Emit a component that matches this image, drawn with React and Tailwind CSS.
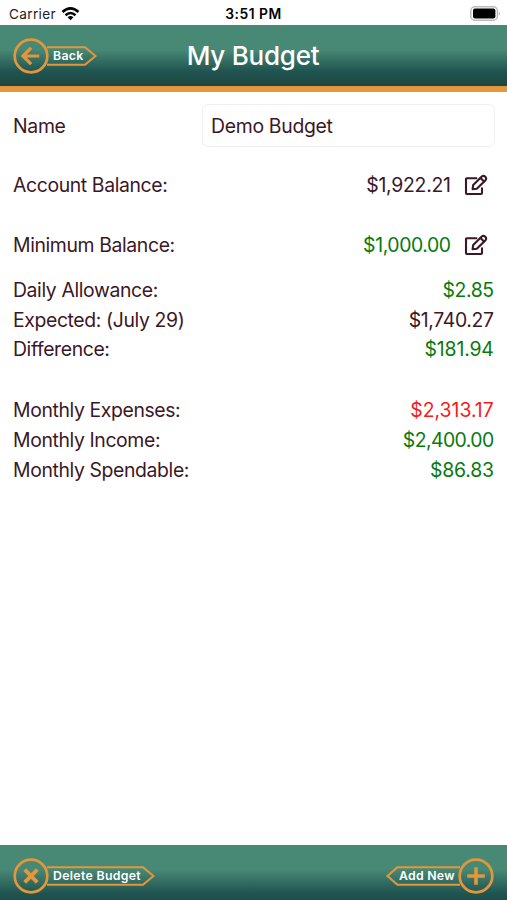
function EditIcon() {
  return (
    <svg className="h-[22px] w-6 shrink-0" viewBox="0 0 24 22" fill="none" stroke="#3b1727" strokeWidth="2.1" strokeLinecap="round" strokeLinejoin="round">
      <path d="M12.4 4.2H2.9Q2 4.2 2 5.1V19.1Q2 20 2.9 20H17.1Q18 20 18 19.1V14.4" />
      <path d="M8.6 15.2 9.2 11 17.8 2.5Q19.5 1.2 21.3 2.8 22.9 4.5 21.5 6.2L12.8 14.8Z" />
      <path d="M16.5 4.1 20 7.6" />
    </svg>
  );
}

function TagLeft({ label, width, icon }) {
  return (
    <button className="relative flex h-9 items-center text-left" style={{ width }}>
      <svg className="absolute inset-0 h-full w-full" fill="none" stroke="#e4963c" strokeWidth="2.1">
        <path d={`M34 9.2H${width - 12}L${width - 1.5} 18L${width - 12} 26.8H34`} />
        <circle cx="18" cy="18" r="16.3" strokeWidth="2.7" />
        {icon}
      </svg>
      <span className="relative ml-[40px] whitespace-nowrap text-[12.3px] font-semibold leading-4 tracking-[0.32px] text-white">{label}</span>
    </button>
  );
}

function Row({ label, value, tracking = "tracking-[-0.3px]", color = "text-[#3b1727]", edit, className = "h-[29.8px]" }) {
  return (
    <div className={`flex items-center justify-between ${className}`}>
      <span className="tracking-[-0.38px]">{label}</span>
      <span className="flex items-center">
        <span className={`${color} ${tracking}`}>{value}</span>
        {edit && <span className="ml-[13px] mr-[6px]"><EditIcon /></span>}
      </span>
    </div>
  );
}

export default function App() {
  return (
    <div className="flex h-[900px] w-[507px] flex-col overflow-hidden bg-white font-['Inter',sans-serif] text-[19.4px] leading-[24px] text-[#3b1727]">
      <div className="grid h-[25px] shrink-0 grid-cols-[1fr_auto_1fr] items-center pl-[9px] pr-[6px] pt-[2px] text-black">
        <div className="flex items-center gap-[5px]">
          <span className="text-[13.6px] leading-4 tracking-[0.35px] text-[#222]">Carrier</span>
          <svg className="h-[14px] w-[19px]" viewBox="0 0 18 14" fill="none" stroke="#000" strokeWidth="2.5">
            <path d="M1 5Q9-2.2 17 5M4 8.2Q9 3.8 14 8.2" />
            <path d="M6.1 10.3Q9 7.9 11.9 10.3L9 13.2Z" fill="#000" stroke="none" />
          </svg>
        </div>
        <span className="-ml-[3px] text-center text-[13.8px] font-semibold leading-4 tracking-[0.5px]">3:51 PM</span>
        <svg className="h-4 w-[31px] justify-self-end" viewBox="0 0 31 16">
          <rect x=".8" y=".8" width="26.6" height="13.4" rx="4" fill="#fff" stroke="#bcbcbc" strokeWidth="1.5" />
          <rect x="3" y="2.6" width="22.4" height="9.8" rx="2" fill="#000" />
          <path d="M28.8 5.2Q30.7 7.5 28.8 9.8Z" fill="#aaa" />
        </svg>
      </div>
      <header className="grid h-[67px] shrink-0 grid-cols-[1fr_auto_1fr] items-center border-b-[6px] border-[#e4963c] bg-[linear-gradient(#488975_0%,#488975_40%,#205451_76%,#1e4641_100%)] px-[13px]">
        <TagLeft label="Back" width={84} icon={<path d="M26.2 18H10.5M18.1 9.8 9.9 18 18.1 26.2" strokeWidth="3.2" />} />
        <h1 className="-ml-px text-[26px] font-medium leading-8 tracking-[-0.25px] text-white">My Budget</h1>
        <span />
      </header>
      <main className="flex-1 pl-[13px] pr-[12.5px] pt-[12px]">
        <div className="flex h-[43px] items-center tracking-[-0.3px]">
          <span className="w-[188.5px] shrink-0">Name</span>
          <div className="flex h-[43px] flex-1 items-center rounded-[6px] border-[1.5px] border-[#f0f0f0] pl-[8.5px]">Demo Budget</div>
        </div>
        <div className="pr-[0.8px]">
          <Row label="Account Balance:" value="$1,922.21" tracking="tracking-[-0.25px]" edit className="mt-[23px] h-[30px]" />
          <Row label="Minimum Balance:" value="$1,000.00" tracking="tracking-[-0.4px]" color="text-[#087a10]" edit className="mt-[30px] h-[30px]" />
          <div className="mt-[15px]">
            <Row label="Daily Allowance:" value="$2.85" tracking="tracking-[-0.4px]" color="text-[#087a10]" />
            <Row label="Expected: (July 29)" value="$1,740.27" tracking="tracking-[-0.35px]" />
            <Row label="Difference:" value="$181.94" tracking="tracking-[-0.15px]" color="text-[#087a10]" />
          </div>
          <div className="mt-[31px]">
            <Row label="Monthly Expenses:" value="$2,313.17" tracking="tracking-[0px]" color="text-[#f51b1b]" />
            <Row label="Monthly Income:" value="$2,400.00" tracking="tracking-[-0.55px]" color="text-[#087a10]" />
            <Row label="Monthly Spendable:" value="$86.83" tracking="tracking-[-0.2px]" color="text-[#087a10]" />
          </div>
        </div>
      </main>
      <footer className="flex h-[55px] shrink-0 items-center justify-between bg-[linear-gradient(#488975_0%,#488975_44%,#205451_88%,#1f4e4a_100%)] px-[13px] pt-[7px]">
        <TagLeft label="Delete Budget" width={142} icon={<path d="M11.7 11.7 24.3 24.3M24.3 11.7 11.7 24.3" strokeWidth="4" />} />
        <button className="relative flex h-9 w-[109px] items-center">
          <svg className="absolute inset-0 h-full w-full" fill="none" stroke="#e4963c" strokeWidth="2.1">
            <path d="M75 9.2H12.5L2.5 18 12.5 26.8H75" />
            <circle cx="91" cy="18" r="16.3" strokeWidth="2.7" />
            <path d="M91 9.2V26.8M82.2 18H99.8" strokeWidth="3.6" />
          </svg>
          <span className="relative ml-[14px] whitespace-nowrap text-[12.3px] font-semibold leading-4 tracking-[0.25px] text-white">Add New</span>
        </button>
      </footer>
    </div>
  );
}
